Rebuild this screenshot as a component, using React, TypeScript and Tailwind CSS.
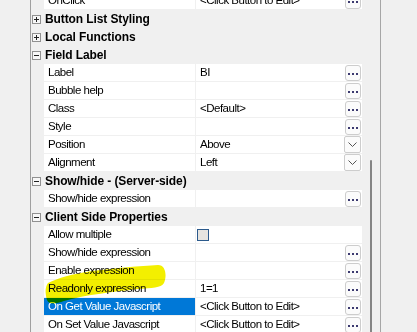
import React from "react";

type Row =
  | { kind: "cat"; label: string; open: boolean }
  | {
      kind: "prop";
      label: string;
      value?: string;
      btn?: "ellipsis" | "drop" | "check";
      selected?: boolean;
    };

const rows: Row[] = [
  { kind: "prop", label: "OnClick", value: "<Click Button to Edit>", btn: "ellipsis" },
  { kind: "cat", label: "Button List Styling", open: false },
  { kind: "cat", label: "Local Functions", open: false },
  { kind: "cat", label: "Field Label", open: true },
  { kind: "prop", label: "Label", value: "BI", btn: "ellipsis" },
  { kind: "prop", label: "Bubble help", value: "", btn: "ellipsis" },
  { kind: "prop", label: "Class", value: "<Default>", btn: "ellipsis" },
  { kind: "prop", label: "Style", value: "", btn: "ellipsis" },
  { kind: "prop", label: "Position", value: "Above", btn: "drop" },
  { kind: "prop", label: "Alignment", value: "Left", btn: "drop" },
  { kind: "cat", label: "Show/hide - (Server-side)", open: true },
  { kind: "prop", label: "Show/hide expression", value: "", btn: "ellipsis" },
  { kind: "cat", label: "Client Side Properties", open: true },
  { kind: "prop", label: "Allow multiple", btn: "check" },
  { kind: "prop", label: "Show/hide expression", value: "", btn: "ellipsis" },
  { kind: "prop", label: "Enable expression", value: "", btn: "ellipsis" },
  { kind: "prop", label: "Readonly expression", value: "1=1", btn: "ellipsis" },
  { kind: "prop", label: "On Get Value Javascript", value: "<Click Button to Edit>", btn: "ellipsis", selected: true },
  { kind: "prop", label: "On Set Value Javascript", value: "<Click Button to Edit>", btn: "ellipsis" },
];

function Ellipsis() {
  return (
    <div className="ml-auto mr-[1px] flex h-[16px] w-[16px] shrink-0 items-end justify-center gap-[2px] rounded-[3px] border border-[#cdcdcd] bg-[#fbfbfb] pb-[5px]">
      <span className="h-[2px] w-[2px] bg-[#3c3a70]" />
      <span className="h-[2px] w-[2px] bg-[#3c3a70]" />
      <span className="h-[2px] w-[2px] bg-[#3c3a70]" />
    </div>
  );
}

function Drop() {
  return (
    <div className="ml-auto mr-[1px] flex h-[17px] w-[17px] shrink-0 items-center justify-center rounded-[2px] border border-[#cdcdcd] bg-[#fbfbfb]">
      <svg width="9" height="5" viewBox="0 0 9 5">
        <path d="M0.5 0.5 L4.5 4.5 L8.5 0.5" fill="none" stroke="#555" strokeWidth="1" />
      </svg>
    </div>
  );
}

function Toggle({ open }: { open: boolean }) {
  return (
    <div className="ml-[1px] flex h-[9px] w-[9px] items-center justify-center border border-[#919191] bg-[#f7f7f7]">
      <svg width="7" height="7" viewBox="0 0 7 7">
        <path d="M1 3.5 H6" stroke="#222" strokeWidth="1" />
        {!open && <path d="M3.5 1 V6" stroke="#222" strokeWidth="1" />}
      </svg>
    </div>
  );
}

export default function App() {
  return (
    <div
      className="relative flex h-[332px] w-[417px] overflow-hidden bg-[#f0f0f0] text-black"
      style={{ fontFamily: '"Liberation Sans", Arial, sans-serif' }}
    >
      <div className="w-[30px] shrink-0" />
      <div className="w-px shrink-0 bg-[#a0a0a0]" />
      <div className="mt-[-8px] flex w-[331px] shrink-0 flex-col">
        {rows.map((r, i) =>
          r.kind === "cat" ? (
            <div key={i} className="flex h-[18px] shrink-0 items-center">
              <div className="flex w-[14px] shrink-0 items-center">
                <Toggle open={r.open} />
              </div>
              <span className="whitespace-nowrap text-[12px] font-bold leading-[17px] tracking-[-0.1px]">
                {r.label}
              </span>
            </div>
          ) : (
            <div key={i} className="flex h-[18px] shrink-0 items-start">
              <div className="w-[13px] shrink-0" />
              <div
                className={
                  r.selected
                    ? "flex h-[17px] w-[151px] shrink-0 items-center bg-[#0078d7] pl-[4px] text-white"
                    : "flex h-[17px] w-[151px] shrink-0 items-center bg-white pl-[4px]"
                }
              >
                <span className="whitespace-nowrap text-[11.5px] leading-[17px] tracking-[-0.5px]">
                  {r.label}
                </span>
              </div>
              <div className="ml-px flex h-[17px] flex-1 items-center bg-white">
                {r.btn === "check" ? (
                  <div className="ml-[1px] h-[12px] w-[12px] border border-[#2c5a8c] bg-[#e6e4e0]" />
                ) : (
                  <span className="whitespace-nowrap pl-[4px] text-[11.5px] leading-[17px] tracking-[-0.5px]">
                    {r.value}
                  </span>
                )}
                {r.btn === "ellipsis" && <Ellipsis />}
                {r.btn === "drop" && <Drop />}
              </div>
            </div>
          )
        )}
      </div>
      <div className="flex w-[18px] shrink-0 flex-col pl-[8px] pt-[160px]">
        <div className="w-[2px] flex-1 rounded-t-[1px] bg-[#858585]" />
      </div>
      <div className="w-px shrink-0 bg-[#a6a6a6]" />
      <div className="flex-1" />
      <svg
        className="pointer-events-none absolute left-0 top-0 mix-blend-multiply"
        width="417"
        height="332"
        viewBox="0 0 417 332"
        style={{ filter: "blur(0.6px)" }}
      >
        <path
          d="M48,283 C58,278 72,274 92,271 C116,268 140,266 158,265 C166,265 167,276 164,283 C161,288 152,288 138,289 C112,292 84,295 64,301 C56,304 49,305 47,300 C45,293 45,287 48,283 Z"
          fill="#f3ef00"
        />
      </svg>
    </div>
  );
}
